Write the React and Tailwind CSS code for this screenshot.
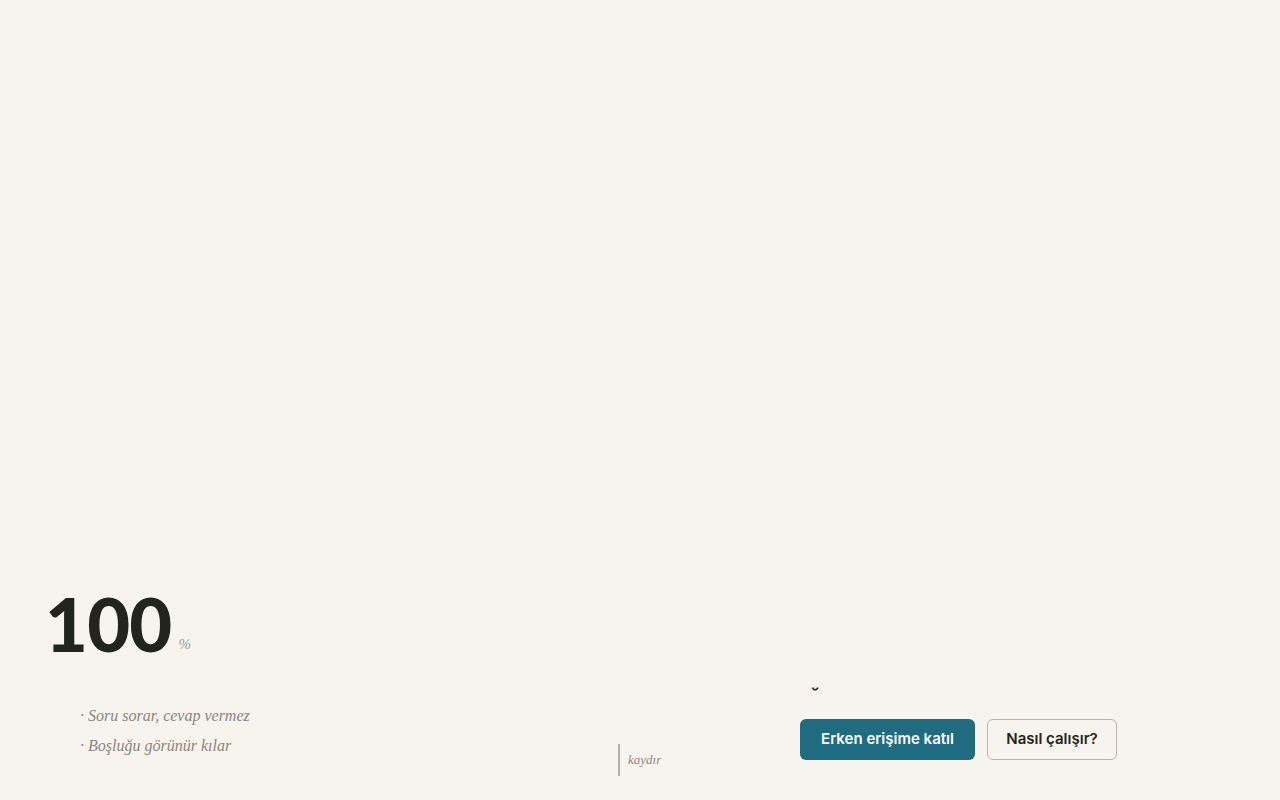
export default function App() {
  return (
    <div className="h-screen w-full bg-[#f7f4ee] flex flex-col justify-end overflow-hidden">
      {/* Big counter */}
      <div className="pl-[45px] flex items-end">
        <span className="font-['Lato',sans-serif] font-black text-[74px] leading-none tracking-[-0.01em] text-[#22251b]">
          100
        </span>
        <span className="ml-[7px] mb-[6px] font-['Liberation_Serif',serif] italic text-[15px] text-[#a29d95]">
          %
        </span>
      </div>

      {/* Bottom row */}
      <div className="grid grid-cols-[618px_182px_1fr] items-end pb-[24px]">
        <ul className="pl-[80px] pt-[40px] mb-[15px] font-['Liberation_Serif',serif] italic text-[16px] leading-[30px] text-[#8a857d]">
          <li>· Soru sorar, cevap vermez</li>
          <li>· Boşluğu görünür kılar</li>
        </ul>

        <div className="border-l-2 border-[#b3aea6] h-[32px] pl-[8px] flex items-center">
          <span className="font-['Liberation_Serif',serif] italic text-[13px] text-[#8e8980]">kaydır</span>
        </div>

        <div className="flex flex-col items-start mb-[16px]">
          <span className="ml-[11px] h-[24px] text-[20px] font-semibold leading-none text-[#22251b] font-['Inter',sans-serif]">˘</span>
          <div className="flex gap-[12px] mt-[9px] font-['Inter',sans-serif]">
            <button className="h-[41px] w-[175px] rounded-[6px] bg-[#1f6b80] text-white text-[15px] font-semibold">
              Erken erişime katıl
            </button>
            <button className="h-[41px] w-[130px] rounded-[6px] border border-[#b9b3ab] text-[#22251b] text-[15px] font-semibold">
              Nasıl çalışır?
            </button>
          </div>
        </div>
      </div>
    </div>
  );
}
